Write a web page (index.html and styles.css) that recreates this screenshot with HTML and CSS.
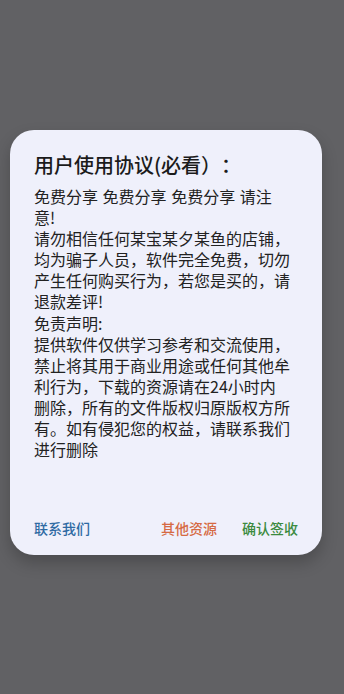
FILE: index.html
```html
<!DOCTYPE html>
<html lang="zh-CN">
<head>
<meta charset="utf-8">
<link rel="stylesheet" href="styles.css">
</head>
<body>
<div class="overlay">
  <div class="dialog">
    <h1 class="title">用户使用协议(必看）：</h1>
    <p class="content">免费分享 免费分享 免费分享 请注意!<br>请勿相信任何某宝某夕某鱼的店铺，均为骗子人员，软件完全免费，切勿产生任何购买行为，若您是买的，请退款差评!<br>免责声明:<br>提供软件仅供学习参考和交流使用，禁止将其用于商业用途或任何其他牟利行为，下载的资源请在24小时内删除，所有的文件版权归原版权方所有。如有侵犯您的权益，请联系我们进行删除</p>
    <div class="actions">
      <span class="btn btn-contact">联系我们</span>
      <span class="spacer"></span>
      <span class="btn btn-other">其他资源</span>
      <span class="btn btn-confirm">确认签收</span>
    </div>
  </div>
</div>
</body>
</html>
```

FILE: styles.css
```css
html, body {
  margin: 0;
  padding: 0;
  height: 100%;
}
body {
  background: #616164;
  font-family: "Noto Sans CJK SC", sans-serif;
  text-spacing-trim: space-all;
}
.overlay {
  height: 100%;
  box-sizing: border-box;
  padding: 130px 0 0 10px;
}
.dialog {
  width: 312px;
  height: 425px;
  box-sizing: border-box;
  background: #eff0fb;
  border-radius: 24px;
  padding: 21px 24px 17px 24px;
  display: flex;
  flex-direction: column;
  box-shadow: 0 8px 16px rgba(0, 0, 0, 0.22);
}
.title {
  margin: 0;
  font-size: 20px;
  line-height: 28px;
  font-weight: 500;
  color: #1b1b1b;
}
.content {
  margin: 7px 0 0 0;
  width: 256px;
  font-size: 16px;
  line-height: 21.1px;
  color: #222222;
  word-spacing: 1px;
}
.actions {
  margin-top: auto;
  display: flex;
  align-items: center;
  height: 20px;
}
.btn {
  font-size: 14px;
  line-height: 20px;
  font-weight: 500;
}
.spacer {
  flex: 1;
}
.btn-contact {
  color: #2e6aa3;
}
.btn-other {
  color: #d66a43;
  margin-right: 25px;
}
.btn-confirm {
  color: #3b8a3e;
}
```
